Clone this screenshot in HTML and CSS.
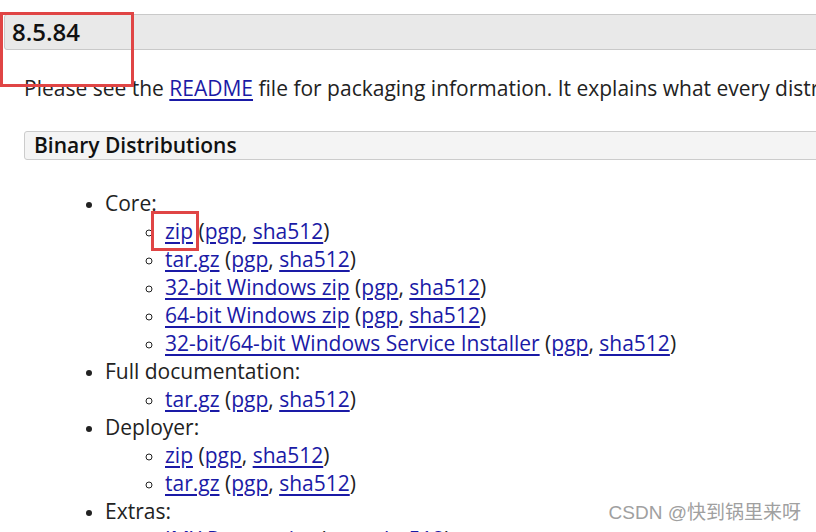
FILE: index.html
```html
<!DOCTYPE html>
<html>
<head>
<meta charset="utf-8">
<link rel="stylesheet" href="styles.css">
</head>
<body>
<div class="page">
  <h3 class="version">8.5.84</h3>
  <div class="section">
    <p class="intro">Please see the <a href="#">README</a> file for packaging information. It explains what every distribution contains.</p>
    <h4 class="sub">Binary Distributions</h4>
    <ul class="outer">
      <li>Core:
        <ul class="inner">
          <li><a href="#">zip</a> (<a href="#">pgp</a>, <a href="#">sha512</a>)</li>
          <li><a href="#">tar.gz</a> (<a href="#">pgp</a>, <a href="#">sha512</a>)</li>
          <li><a href="#">32-bit Windows zip</a> (<a href="#">pgp</a>, <a href="#">sha512</a>)</li>
          <li><a href="#">64-bit Windows zip</a> (<a href="#">pgp</a>, <a href="#">sha512</a>)</li>
          <li><a href="#">32-bit/64-bit Windows Service Installer</a> (<a href="#">pgp</a>, <a href="#">sha512</a>)</li>
        </ul>
      </li>
      <li>Full documentation:
        <ul class="inner">
          <li><a href="#">tar.gz</a> (<a href="#">pgp</a>, <a href="#">sha512</a>)</li>
        </ul>
      </li>
      <li>Deployer:
        <ul class="inner">
          <li><a href="#">zip</a> (<a href="#">pgp</a>, <a href="#">sha512</a>)</li>
          <li><a href="#">tar.gz</a> (<a href="#">pgp</a>, <a href="#">sha512</a>)</li>
        </ul>
      </li>
      <li>Extras:
        <ul class="inner">
          <li><a href="#">JMX Remote jar</a> (<a href="#">pgp</a>, <a href="#">sha512</a>)</li>
        </ul>
      </li>
    </ul>
  </div>
  <div class="mark mark-version"></div>
  <div class="mark mark-zip"></div>
  <div class="watermark">CSDN @快到锅里来呀</div>
</div>
</body>
</html>
```
FILE: styles.css
```css
html, body {
  margin: 0;
  padding: 0;
  background: #fff;
  overflow: hidden;
}
.page {
  position: relative;
  width: 816px;
  height: 532px;
  overflow: hidden;
  font-family: "Open Sans", "Noto Sans", sans-serif;
  font-size: 21px;
  color: #222;
}
a {
  color: #1a1aa6;
  text-decoration: underline;
  text-underline-offset: 3px;
}
.version {
  margin: 14px -40px 0 4px;
  height: 34px;
  line-height: 34px;
  background: #e9e9e9;
  border: 1px solid #c9c9c9;
  border-radius: 3px;
  padding: 0 0 0 7px;
  font-size: 24px;
  font-weight: 600;
  color: #111;
}
.section {
  padding-left: 24px;
}
.intro {
  margin: 24px 0 0 0;
  line-height: 28px;
  white-space: nowrap;
}
.sub {
  margin: 29px -40px 0 0;
  height: 27px;
  line-height: 27px;
  background: #f4f4f4;
  border: 1px solid #cccccc;
  border-radius: 3px;
  padding: 0 0 0 9px;
  font-size: 21px;
  font-weight: 600;
  color: #111;
}
.outer {
  margin: 29px 0 0 0;
  padding-left: 81px;
  line-height: 28px;
  list-style: disc;
}
.inner {
  margin: 0;
  padding-left: 60px;
  list-style: circle;
}
.outer li::marker {
  font-size: 18px;
}
.mark {
  position: absolute;
  border: 3px solid #e04545;
  box-sizing: border-box;
}
.mark-version {
  left: 0;
  top: 12px;
  width: 134px;
  height: 75px;
}
.mark-zip {
  left: 151px;
  top: 211px;
  width: 48px;
  height: 40px;
}
.watermark {
  position: absolute;
  right: 15px;
  bottom: 8px;
  font-family: "Liberation Sans", "Noto Sans CJK SC", sans-serif;
  font-size: 19px;
  color: #a0a0a0;
}
```
